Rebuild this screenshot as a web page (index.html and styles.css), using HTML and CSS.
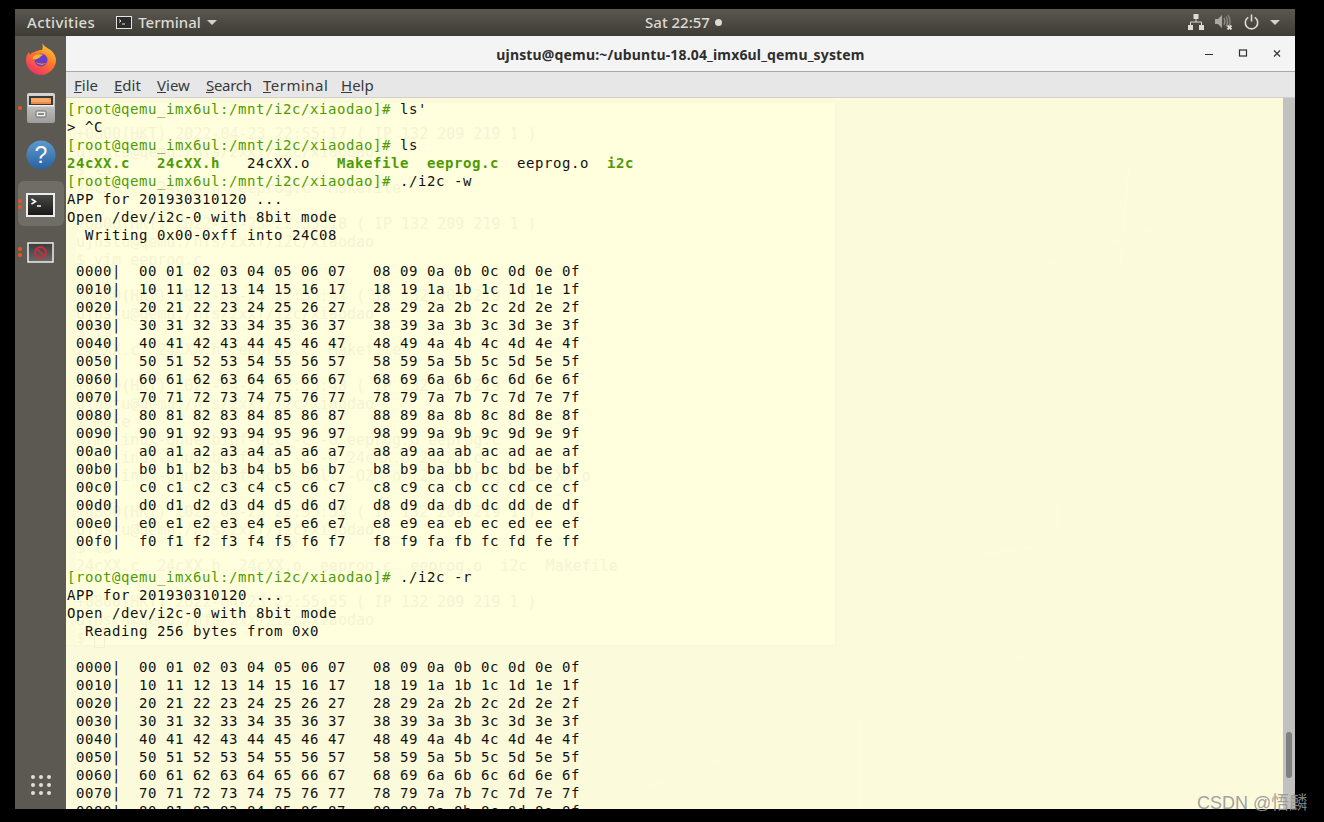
FILE: index.html
```html
<!DOCTYPE html>
<html>
<head>
  <meta charset="UTF-8">
  <title>ujnstu@qemu:~/ubuntu-18.04_imx6ul_qemu_system</title>
  <link rel="stylesheet" href="styles.css">
</head>
<body>
  <div class="screen">
    <!-- top bar -->
    <div class="topbar">
      <div class="bar-left">
        <span class="activities">Activities</span>
        <span class="app-menu">
          <svg class="app-icon" width="16" height="13" viewBox="0 0 16 13">
            <rect x="0.5" y="0.5" width="15" height="12" fill="#2c2c2c" stroke="#e4e4e0"/>
            <path d="M3 3.5l2 1.5-2 1.5M6 8h3" fill="none" stroke="#e8e8e8" stroke-width="1"/>
          </svg>
          Terminal
          <span class="caret"></span>
        </span>
      </div>
      <div class="clock">Sat 22:57<span class="clock-dot"></span></div>
      <div class="bar-right">
        <svg class="tray-icon" width="16" height="16" viewBox="0 0 16 16">
          <path d="M5.5 0h5v5h-5zM0 11h5v5H0zM11 11h5v5h-5z" fill="#dcdbd6"/>
          <path d="M8 5v3M2.5 11V8h11v3" fill="none" stroke="#dcdbd6"/>
        </svg>
        <svg class="tray-icon" width="18" height="16" viewBox="0 0 18 16">
          <path d="M0 5h3l4-4v13l-4-4H0z" fill="#a9a8a3"/>
          <path d="M9 4q2 3.500 0 7M11 2.500q3 5 0 10M13 1q3.500 6 1 11" fill="none" stroke="#8c8b86" stroke-width="1.300"/>
          <path d="M12.500 11.500l4 4M16.500 11.500l-4 4" stroke="#dcdbd6" stroke-width="1.800"/>
        </svg>
        <svg class="tray-icon" width="15" height="16" viewBox="0 0 15 16">
          <path d="M4.300 3.400a6.200 6.200 0 1 0 6.400 0" fill="none" stroke="#dcdbd6" stroke-width="1.600"/>
          <path d="M7.500 0.500v7" stroke="#dcdbd6" stroke-width="1.600"/>
        </svg>
        <span class="caret"></span>
      </div>
    </div>

    <div class="desktop">
      <!-- dock -->
      <div class="dock">
        <div class="dock-item dock-up">
          <svg width="32" height="32" viewBox="0 0 32 32">
            <defs>
              <linearGradient id="ffBody" x1="0.8" y1="0" x2="0.2" y2="1">
                <stop offset="0" stop-color="#ffd43a"/>
                <stop offset="0.45" stop-color="#ff7a28"/>
                <stop offset="1" stop-color="#f0286e"/>
              </linearGradient>
            </defs>
            <path d="M17 0c2 3 4 4 7 6 5 3 7 8 7 11 0 8-7 15-15 15S1 25 1 17c0-3 1-6 3-8l1 3c1-2 3-3 5-3-1 0 3-2 7-2 1-3 1-5 0-7z" fill="url(#ffBody)"/>
            <circle cx="16" cy="17" r="6.500" fill="#6a3fc4"/>
            <path d="M9 13c3-2 7-2 10-1-3 0-3 2-5 3-2 1-4 2-6 1-1-1 0-2 1-3z" fill="#ffb52e"/>
            <path d="M11 19c2 3 7 4 10 1-3 1-7 1-10-1z" fill="#ff9a2e"/>
          </svg>
        </div>
        <div class="dock-item">
          <span class="dock-dots"><i></i></span>
          <svg width="28" height="30" viewBox="0 0 28 30">
            <defs>
              <linearGradient id="cabinet" x1="0" y1="0" x2="0" y2="1">
                <stop offset="0" stop-color="#d6d6d4"/>
                <stop offset="1" stop-color="#9d9d9b"/>
              </linearGradient>
            </defs>
            <rect x="0" y="0" width="28" height="30" rx="2" fill="url(#cabinet)"/>
            <rect x="2" y="3" width="24" height="10" fill="#3a3936"/>
            <rect x="4" y="5" width="20" height="6" fill="#f08a3c"/>
            <path d="M4 6h18M4 8h20" stroke="#f8c79c"/>
            <rect x="1" y="12" width="26" height="1.500" fill="#f0f0ee"/>
            <rect x="9" y="18" width="10" height="6" rx="1" fill="#eeeeec" stroke="#6a6a68"/>
            <rect x="11" y="20" width="6" height="2" fill="#8a8a88"/>
          </svg>
        </div>
        <div class="dock-item dock-up">
          <svg width="30" height="30" viewBox="0 0 30 30">
            <defs>
              <linearGradient id="helpBall" x1="0" y1="0" x2="0" y2="1">
                <stop offset="0" stop-color="#5b9ad0"/>
                <stop offset="1" stop-color="#2a62a0"/>
              </linearGradient>
            </defs>
            <circle cx="15" cy="15" r="14.500" fill="url(#helpBall)"/>
            <text class="help-mark" x="15" y="23" text-anchor="middle">?</text>
          </svg>
        </div>
        <div class="dock-item dock-active">
          <span class="dock-dots"><i></i><i></i></span>
          <svg width="29" height="24" viewBox="0 0 29 24">
            <defs>
              <linearGradient id="termBg" x1="0" y1="0" x2="0" y2="1">
                <stop offset="0" stop-color="#4a4a48"/>
                <stop offset="1" stop-color="#161616"/>
              </linearGradient>
            </defs>
            <rect x="1" y="1" width="27" height="22" fill="url(#termBg)" stroke="#ececea" stroke-width="2"/>
            <path d="M5.500 6l4 2.500-4 2.500" fill="none" stroke="#fff" stroke-width="1.500"/>
            <path d="M11 13h4" stroke="#fff" stroke-width="1.500"/>
          </svg>
        </div>
        <div class="dock-item">
          <span class="dock-dots"><i></i><i></i></span>
          <svg width="27" height="21" viewBox="0 0 27 21">
            <defs>
              <linearGradient id="blockBg" x1="0" y1="0" x2="0" y2="1">
                <stop offset="0" stop-color="#3a3a3a"/>
                <stop offset="1" stop-color="#6a6a6a"/>
              </linearGradient>
            </defs>
            <rect x="1" y="1" width="25" height="19" fill="url(#blockBg)" stroke="#ececea" stroke-width="1.500"/>
            <circle cx="13.500" cy="10.500" r="5.500" fill="none" stroke="#c4303e" stroke-width="2"/>
            <path d="M9.800 6.800l7.400 7.400" stroke="#c4303e" stroke-width="2"/>
          </svg>
        </div>
        <div class="dock-grid">
          <svg width="20" height="20" viewBox="0 0 20 20" fill="#e0dfdb">
            <circle cx="2" cy="2" r="2"/><circle cx="10" cy="2" r="2"/><circle cx="18" cy="2" r="2"/>
            <circle cx="2" cy="10" r="2"/><circle cx="10" cy="10" r="2"/><circle cx="18" cy="10" r="2"/>
            <circle cx="2" cy="18" r="2"/><circle cx="10" cy="18" r="2"/><circle cx="18" cy="18" r="2"/>
          </svg>
        </div>
      </div>

      <!-- terminal window -->
      <div class="window">
        <div class="titlebar">
          <span class="title">ujnstu@qemu:~/ubuntu-18.04_imx6ul_qemu_system</span>
          <div class="win-controls">
            <svg width="10" height="10" viewBox="0 0 10 10"><path d="M1 7.500h8" stroke="#2e2e2e" stroke-width="1"/></svg>
            <svg width="10" height="10" viewBox="0 0 10 10"><rect x="1.500" y="3" width="7" height="6" fill="none" stroke="#2e2e2e" stroke-width="1.200"/></svg>
            <svg width="10" height="10" viewBox="0 0 10 10"><path d="M2 3.500l6 6M8 3.500l-6 6" stroke="#2e2e2e" stroke-width="1.100"/></svg>
          </div>
        </div>
        <div class="menubar">
          <span><u>F</u>ile</span>
          <span><u>E</u>dit</span>
          <span><u>V</u>iew</span>
          <span class="menu-search"><u>S</u>earch</span>
          <span class="menu-terminal"><u>T</u>erminal</span>
          <span><u>H</u>elp</span>
        </div>
        <div class="term-wrap">
          <div class="terminal">
            <!-- the translucent window and wallpaper showing through -->
            <svg class="wallpaper" width="1217" height="711" viewBox="66 98 1217 711" fill="none" stroke="#fdfce0" stroke-width="1">
              <circle cx="985" cy="131" r="20"/>
              <path d="M838 233Q920 270 969 309Q1000 340 1022 387Q1045 440 1055 490Q1060 520 1057 543Q1045 600 1022 658"/>
              <path d="M1164 225L1051 262L890 375L841 428"/>
              <path d="M841 355Q890 380 940 393Q990 400 1022 387Q1080 365 1100 355Q1115 320 1120 265L1129 165L1095 100"/>
              <path d="M1137 110Q1160 180 1166 215Q1150 290 1104 342Q1080 370 1038 416Q990 450 907 482Q885 520 882 540L858 642"/>
              <path d="M1129 174L1055 262L944 391L907 482"/>
              <path d="M845 522L886 540Q930 555 981 554L1055 545"/>
              <path d="M870 652Q930 640 1022 658Q1080 680 1125 700"/>
              <path d="M640 790L720 760M860 720V809"/>
            </svg>
            <div class="ghost-panel">
<pre class="ghost-text">+0800(HKT) 2022-04-23 22:55:17 ( IP 132 209 219 1 )
ujnstu@qemu:/nfs/2xxT/i2c/xiaodao
$ ls
24cXX.c  24cXX.h  eeprog.c  Makefile

+0800(HKT) 2022-04-23 22:55:18 ( IP 132 209 219 1 )
ujnstu@qemu:/nfs/2xxT/i2c/xiaodao
$ vim eeprog.c

+0800(HKT) 2022-04-23 22:55:47 ( IP 132 209 219 1 )
ujnstu@qemu:/nfs/2xxT/i2c/xiaodao
$ ls
24cXX.c  24cXX.h  eeprog.c  Makefile

+0800(HKT) 2022-04-23 22:55:48 ( IP 132 209 219 1 )
ujnstu@qemu:/nfs/2xxT/i2c/xiaodao
$ make
arm-linux-gnueabihf-gcc -c -o eeprog.o eeprog.c
arm-linux-gnueabihf-gcc -c -o 24cXX.o 24cXX.c
arm-linux-gnueabihf-gcc -Wall -O2 -o i2c eeprog.o 24cXX.o

+0800(HKT) 2022-04-23 22:55:53 ( IP 132 209 219 1 )
ujnstu@qemu:/nfs/2xxT/i2c/xiaodao
$ ls
24cXX.c  24cXX.h  24cXX.o  eeprog.c  eeprog.o  i2c  Makefile

+0800(HKT) 2022-04-23 22:55:55 ( IP 132 209 219 1 )
ujnstu@qemu:/nfs/2xxT/i2c/xiaodao
$ <span class="ghost-cursor"> </span></pre>
            </div>
<pre class="term-text"><span class="prompt">[root@qemu_imx6ul:/mnt/i2c/xiaodao]#</span> ls'
&gt; ^C
<span class="prompt">[root@qemu_imx6ul:/mnt/i2c/xiaodao]#</span> ls
<b>24cXX.c</b>   <b>24cXX.h</b>   24cXX.o   <b>Makefile</b>  <b>eeprog.c</b>  eeprog.o  <b>i2c</b>
<span class="prompt">[root@qemu_imx6ul:/mnt/i2c/xiaodao]#</span> ./i2c -w
APP for 201930310120 ...
Open /dev/i2c-0 with 8bit mode
  Writing 0x00-0xff into 24C08

 0000|  00 01 02 03 04 05 06 07   08 09 0a 0b 0c 0d 0e 0f
 0010|  10 11 12 13 14 15 16 17   18 19 1a 1b 1c 1d 1e 1f
 0020|  20 21 22 23 24 25 26 27   28 29 2a 2b 2c 2d 2e 2f
 0030|  30 31 32 33 34 35 36 37   38 39 3a 3b 3c 3d 3e 3f
 0040|  40 41 42 43 44 45 46 47   48 49 4a 4b 4c 4d 4e 4f
 0050|  50 51 52 53 54 55 56 57   58 59 5a 5b 5c 5d 5e 5f
 0060|  60 61 62 63 64 65 66 67   68 69 6a 6b 6c 6d 6e 6f
 0070|  70 71 72 73 74 75 76 77   78 79 7a 7b 7c 7d 7e 7f
 0080|  80 81 82 83 84 85 86 87   88 89 8a 8b 8c 8d 8e 8f
 0090|  90 91 92 93 94 95 96 97   98 99 9a 9b 9c 9d 9e 9f
 00a0|  a0 a1 a2 a3 a4 a5 a6 a7   a8 a9 aa ab ac ad ae af
 00b0|  b0 b1 b2 b3 b4 b5 b6 b7   b8 b9 ba bb bc bd be bf
 00c0|  c0 c1 c2 c3 c4 c5 c6 c7   c8 c9 ca cb cc cd ce cf
 00d0|  d0 d1 d2 d3 d4 d5 d6 d7   d8 d9 da db dc dd de df
 00e0|  e0 e1 e2 e3 e4 e5 e6 e7   e8 e9 ea eb ec ed ee ef
 00f0|  f0 f1 f2 f3 f4 f5 f6 f7   f8 f9 fa fb fc fd fe ff

<span class="prompt">[root@qemu_imx6ul:/mnt/i2c/xiaodao]#</span> ./i2c -r
APP for 201930310120 ...
Open /dev/i2c-0 with 8bit mode
  Reading 256 bytes from 0x0

 0000|  00 01 02 03 04 05 06 07   08 09 0a 0b 0c 0d 0e 0f
 0010|  10 11 12 13 14 15 16 17   18 19 1a 1b 1c 1d 1e 1f
 0020|  20 21 22 23 24 25 26 27   28 29 2a 2b 2c 2d 2e 2f
 0030|  30 31 32 33 34 35 36 37   38 39 3a 3b 3c 3d 3e 3f
 0040|  40 41 42 43 44 45 46 47   48 49 4a 4b 4c 4d 4e 4f
 0050|  50 51 52 53 54 55 56 57   58 59 5a 5b 5c 5d 5e 5f
 0060|  60 61 62 63 64 65 66 67   68 69 6a 6b 6c 6d 6e 6f
 0070|  70 71 72 73 74 75 76 77   78 79 7a 7b 7c 7d 7e 7f
 0080|  80 81 82 83 84 85 86 87   88 89 8a 8b 8c 8d 8e 8f</pre>
          </div>
          <div class="scrollbar"><div class="scroll-thumb"></div></div>
        </div>
      </div>
    </div>
  </div>
  <div class="watermark">CSDN @悟麟</div>
</body>
</html>
```

FILE: styles.css
```css
* {
  margin: 0;
  padding: 0;
  box-sizing: border-box;
}

html, body {
  height: 100%;
  background: #000;
  overflow: hidden;
}

body {
  position: relative;
  font-family: 'Noto Sans', sans-serif;
}

.screen {
  width: 1280px;
  height: 800px;
  margin: 9px 0 0 15px;
  display: flex;
  flex-direction: column;
  overflow: hidden;
}

/* top bar */
.topbar {
  height: 27px;
  flex: none;
  display: grid;
  grid-template-columns: 1fr auto 1fr;
  align-items: center;
  padding: 0 15px 1px 12px;
  background: linear-gradient(#5a574f, #3e3c36);
  color: #dcdad3;
  font-size: 15px;
  font-weight: 500;
}

.activities {
  letter-spacing: 0.35px;
}

.bar-left {
  display: flex;
  align-items: center;
  gap: 21px;
}

.app-menu {
  display: flex;
  align-items: center;
  gap: 6px;
}

.caret {
  display: inline-block;
  width: 0;
  height: 0;
  border-left: 5px solid transparent;
  border-right: 5px solid transparent;
  border-top: 5px solid #d2d1cc;
}

.clock {
  display: flex;
  align-items: center;
  gap: 5px;
  margin-left: 60px;
}

.clock-dot {
  width: 7px;
  height: 7px;
  border-radius: 50%;
  background: #dcdad3;
}

.bar-right {
  display: flex;
  align-items: center;
  justify-content: flex-end;
  gap: 11px;
}

/* dock */
.desktop {
  flex: 1;
  display: flex;
  min-height: 0;
}

.dock {
  width: 51px;
  flex: none;
  display: flex;
  flex-direction: column;
  align-items: center;
  background: #5b5951;
}

.dock-item {
  position: relative;
  width: 46px;
  height: 48px;
  flex: none;
  display: flex;
  align-items: center;
  justify-content: center;
}

.dock-up {
  padding-bottom: 2px;
}

.dock-active {
  height: 45px;
  margin: 1px 0 2px;
  padding-top: 3px;
  background: #6f6d66;
  border-radius: 6px;
}

.dock-dots {
  position: absolute;
  left: 0;
  top: 0;
  bottom: 0;
  display: flex;
  flex-direction: column;
  justify-content: center;
  gap: 2px;
}

.dock-dots i {
  display: block;
  width: 4px;
  height: 4px;
  border-radius: 50%;
  background: #e95420;
}

.help-mark {
  font-family: 'Liberation Sans', sans-serif;
  font-size: 23px;
  fill: #fff;
}

.dock-grid {
  margin-top: auto;
  height: 34px;
  display: flex;
  align-items: flex-start;
}

/* window */
.window {
  flex: 1;
  min-width: 0;
  display: flex;
  flex-direction: column;
}

.titlebar {
  height: 36px;
  flex: none;
  display: flex;
  align-items: center;
  justify-content: center;
  position: relative;
  padding-top: 1px;
  background: #f4f4f4;
  border-bottom: 1px solid #a9a9a5;
  color: #2e2e2e;
  font-size: 14px;
  font-weight: 700;
  letter-spacing: 0.16px;
}

.win-controls {
  position: absolute;
  right: 13px;
  top: 11px;
  display: flex;
  gap: 24px;
}

.menubar {
  height: 26px;
  flex: none;
  display: grid;
  grid-template-columns: 40px 43px 49px 57px 78px auto;
  align-items: center;
  padding: 1px 0 0 8px;
  background: #e7e7e7;
  border-bottom: 1px solid #d0d0ce;
  color: #3a3a3a;
  font-size: 15px;
}

.menu-search {
  letter-spacing: -0.3px;
}

.menu-terminal {
  letter-spacing: 0.5px;
}

.term-wrap {
  flex: 1;
  min-height: 0;
  display: flex;
}

.terminal {
  flex: 1;
  position: relative;
  overflow: hidden;
  background: #fbfadb;
}

.wallpaper {
  position: absolute;
  left: 0;
  top: 0;
}

.ghost-panel {
  position: absolute;
  left: 0;
  top: 5px;
  width: 770px;
  height: 543px;
  padding: 22px 0 0 10px;
  background: linear-gradient(90deg, #fcfcdb 10px, #ffffdd 10px);
  border-right: 1px solid #f8f8d8;
  border-bottom: 1px solid #f8f8d8;
}

.ghost-text, .term-text {
  font-family: 'DejaVu Sans Mono', monospace;
  line-height: 18px;
}

.ghost-text {
  font-size: 15px;
  color: #f4f4d3;
}

.ghost-cursor {
  border: 1px solid #f0f0d2;
}

.term-text {
  position: relative;
  padding: 2px 0 0 1px;
  color: #111;
  font-size: 14px;
  letter-spacing: 0.57px;
}

.term-text .prompt {
  color: #4e9a06;
}

.term-text b {
  color: #4e9a06;
}

.scrollbar {
  width: 12px;
  flex: none;
  background: #c1c2c0;
  position: relative;
}

.scroll-thumb {
  position: absolute;
  left: 3px;
  right: 3px;
  top: 634px;
  height: 46px;
  border-radius: 3px;
  background: #7f7f7f;
}

/* csdn mark sits on top of everything */
.watermark {
  position: absolute;
  left: 1197px;
  top: 791px;
  color: rgba(150, 150, 150, 0.9);
  font-family: 'Liberation Sans', 'Noto Sans CJK SC', sans-serif;
  font-size: 18px;
  line-height: 24px;
  white-space: nowrap;
}
```
